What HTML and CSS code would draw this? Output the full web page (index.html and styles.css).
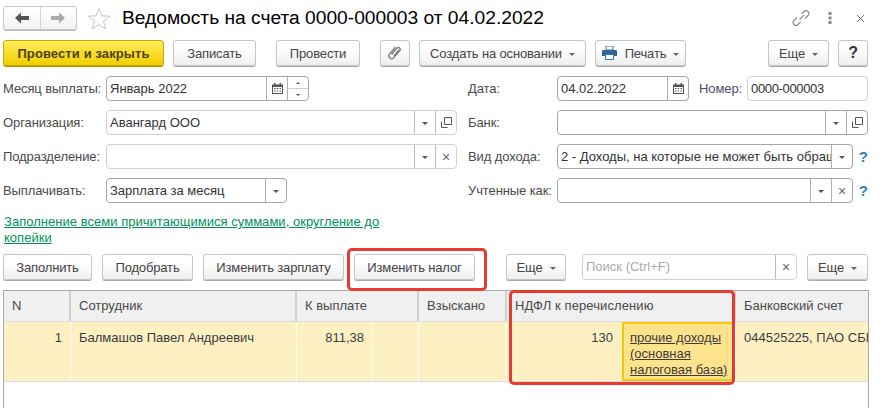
FILE: index.html
```html
<!DOCTYPE html>
<html lang="ru">
<head>
<meta charset="utf-8">
<title>Ведомость на счета</title>
<link rel="stylesheet" href="styles.css">
</head>
<body>
<div class="page">
  <header class="head">
    <div class="nav">
      <span class="nav-b"><svg width="14" height="12" viewBox="0 0 14 12"><path d="M0 6 6 .5V4h8v4H6v3.500z" fill="#555"/></svg></span>
      <span class="nav-b"><svg width="14" height="12" viewBox="0 0 14 12"><path d="M14 6 8 .5V4H0v4h8v3.500z" fill="#aaa"/></svg></span>
    </div>
    <svg class="star" width="24" height="23" viewBox="0 0 24 23"><path d="M12 1.500 14.800 8.800 22.800 9.200 16.500 14.200 18.700 22 12 17.600 5.300 22 7.500 14.200 1.200 9.200 9.200 8.800z" fill="#fff" stroke="#c4c4c4"/></svg>
    <h1 class="title">Ведомость на счета 0000-000003 от 04.02.2022</h1>
    <div class="head-icons">
      <svg width="18" height="18" viewBox="0 0 18 18" fill="none" stroke="#8a8a8a" stroke-width="1.100"><path d="M7.500 10.500 12 6M9.500 5 12 2.500a2.800 2.800 0 0 1 4 4L13 9.500M8.500 13 6 15.500a2.800 2.800 0 0 1-4-4L5 8.500"/></svg>
      <svg width="4" height="12" viewBox="0 0 4 12" fill="#888"><rect x="0.500" y="0" width="3" height="3"/><rect x="0.500" y="4.500" width="3" height="3"/><rect x="0.500" y="9" width="3" height="3"/></svg>
      <svg width="9" height="9" viewBox="0 0 9 9" stroke="#777" stroke-width="1"><path d="M1 1 8 8M8 1 1 8"/></svg>
    </div>
  </header>

  <div class="bar">
    <button class="btn primary">Провести и закрыть</button>
    <button class="btn w83">Записать</button>
    <button class="btn w84 ml11">Провести</button>
    <button class="btn w30 ml11"><svg width="14" height="16" viewBox="0 0 14 16" fill="none" stroke="#777" stroke-width="1.300"><path d="M3.500 9.500 9 3a2 2 0 0 1 3 2.500L5 13.500a3 3 0 0 1-4-3.800L7.500 2"/><path d="M6 11 11 5"/></svg></button>
    <button class="btn w167">Создать на основании<i class="caret"></i></button>
    <button class="btn w91"><svg class="printer" width="15" height="14" viewBox="0 0 15 14"><path d="M4 0h7v4H4z" fill="#fff" stroke="#3d6f9e"/><path d="M1 4h13a1 1 0 0 1 1 1v5h-3V8H3v2H0V5a1 1 0 0 1 1-1z" fill="#2f6496"/><path d="M3.500 8.500h8v5h-8z" fill="#fff" stroke="#3d6f9e"/></svg>Печать<i class="caret"></i></button>
    <span class="spacer"></span>
    <button class="btn w61">Еще<i class="caret"></i></button>
    <button class="btn w30 help">?</button>
  </div>

  <div class="form">
    <div class="col left">
      <div class="row">
        <label class="lbl">Месяц выплаты:</label>
        <div class="field dark w203"><span class="val">Январь 2022</span>
          <span class="fb"><svg class="cal" width="11" height="11" viewBox="0 0 11 11"><path d="M0 1.500h11V11H0z" fill="#555"/><path d="M2 0h1.500v3H2zM7.500 0H9v3H7.500z" fill="#555"/><path d="M1 4h9v6H1z" fill="#fff"/><path d="M2 5h1.500v1H2zM4.700 5h1.500v1H4.700zM7.500 5H9v1H7.500zM2 7.500h1.500v1H2zM4.700 7.500h1.500v1H4.700zM7.500 7.500H9v1H7.500z" fill="#555"/></svg></span>
          <span class="fb spin"><span class="s-up"></span><span class="s-dn"></span></span>
        </div>
      </div>
      <div class="row">
        <label class="lbl">Организация:</label>
        <div class="field grow"><span class="val">Авангард ООО</span>
          <span class="fb"><i class="caret dark"></i></span>
          <span class="fb"><svg width="11" height="11" viewBox="0 0 11 11" fill="none" stroke="#555"><path d="M3.500.5h7v7h-7z"/><path d="M.5 4.500v6h6" /></svg></span>
        </div>
      </div>
      <div class="row">
        <label class="lbl">Подразделение:</label>
        <div class="field grow"><span class="val"></span>
          <span class="fb"><i class="caret dark"></i></span>
          <span class="fb x">×</span>
        </div>
      </div>
      <div class="row">
        <label class="lbl">Выплачивать:</label>
        <div class="field dark w181"><span class="val">Зарплата за месяц</span>
          <span class="fb"><i class="caret dark"></i></span>
        </div>
      </div>
    </div>
    <div class="col right">
      <div class="row">
        <label class="lbl lbl-r">Дата:</label>
        <div class="field dark w132"><span class="val">04.02.2022</span>
          <span class="fb"><svg width="11" height="11" viewBox="0 0 11 11"><path d="M0 1.500h11V11H0z" fill="#555"/><path d="M2 0h1.500v3H2zM7.500 0H9v3H7.500z" fill="#555"/><path d="M1 4h9v6H1z" fill="#fff"/><path d="M2 5h1.500v1H2zM4.700 5h1.500v1H4.700zM7.500 5H9v1H7.500zM2 7.500h1.500v1H2zM4.700 7.500h1.500v1H4.700zM7.500 7.500H9v1H7.500z" fill="#555"/></svg></span>
        </div>
        <label class="lbl lbl-n">Номер:</label>
        <div class="field grow"><span class="val tight">0000-000003</span></div>
      </div>
      <div class="row">
        <label class="lbl lbl-r">Банк:</label>
        <div class="field dark grow"><span class="val"></span>
          <span class="fb"><i class="caret dark"></i></span>
          <span class="fb"><svg width="11" height="11" viewBox="0 0 11 11" fill="none" stroke="#555"><path d="M3.500.5h7v7h-7z"/><path d="M.5 4.500v6h6"/></svg></span>
        </div>
      </div>
      <div class="row">
        <label class="lbl lbl-r">Вид дохода:</label>
        <div class="field dark w296"><span class="val clip">2 - Доходы, на которые не может быть обращ</span>
          <span class="fb"><i class="caret dark"></i></span>
        </div>
        <span class="q">?</span>
      </div>
      <div class="row">
        <label class="lbl lbl-r">Учтенные как:</label>
        <div class="field dark w296"><span class="val"></span>
          <span class="fb"><i class="caret dark"></i></span>
          <span class="fb x">×</span>
        </div>
        <span class="q">?</span>
      </div>
    </div>
  </div>

  <a class="fill-link" href="#">Заполнение всеми причитающимися суммами, округление до копейки</a>

  <div class="bar bar2">
    <button class="btn w89">Заполнить</button>
    <button class="btn w91 ml10">Подобрать</button>
    <button class="btn w141 ml10">Изменить зарплату</button>
    <button class="btn w121 ml10">Изменить налог</button>
    <button class="btn w60 ml31">Еще<i class="caret"></i></button>
    <div class="field search"><span class="val ph">Поиск (Ctrl+F)</span><span class="fb x">×</span></div>
    <button class="btn w61 ml10">Еще<i class="caret"></i></button>
  </div>

  <div class="grid">
    <div class="tr th">
      <div class="c c-n">N</div>
      <div class="c c-e">Сотрудник</div>
      <div class="c c-p">К выплате</div>
      <div class="c c-v">Взыскано</div>
      <div class="c c-t">НДФЛ к перечислению</div>
      <div class="c c-b">Банковский счет</div>
    </div>
    <div class="tr td">
      <div class="c c-n num">1</div>
      <div class="c c-e">Балмашов Павел Андреевич</div>
      <div class="c c-p sub"><span class="num s-a">811,38</span><span class="s-b"></span></div>
      <div class="c c-v"></div>
      <div class="c c-t sub"><span class="num s-c">130</span><span class="s-d"><a href="#">прочие доходы (основная налоговая база)</a></span></div>
      <div class="c c-b clipb">044525225, ПАО СБЕР</div>
    </div>
  </div>

  <div class="mark mark-a"></div>
  <div class="mark mark-b"></div>
</div>
</body>
</html>
```
FILE: styles.css
```css
* { box-sizing: border-box; }
html, body { margin: 0; padding: 0; background: #fff; overflow: hidden; }
.page {
  position: relative; width: 884px; height: 408px; padding: 6px 16px 0 3px;
  font: 13px "Liberation Sans", Arial, sans-serif; color: #444; overflow: hidden;
}
.head { display: flex; align-items: center; height: 24px; }
.nav {
  display: flex; width: 74px; height: 24px; border: 1px solid #c8c8c8; border-radius: 3px;
  background: linear-gradient(#fff, #f2f2f2); box-shadow: 0 1px 0 #bbb;
}
.nav-b { flex: 1; display: flex; align-items: center; justify-content: center; }
.nav-b + .nav-b { border-left: 1px solid #d4d4d4; }
.star { margin-left: 10px; }
.title { margin: 0 0 0 11px; font-size: 19.2px; font-weight: 400; color: #000; white-space: nowrap; }
.head-icons { margin-left: auto; display: flex; align-items: center; width: 85px; margin-right: -9px; }
.head-icons svg:nth-child(2) { margin-left: 18px; }
.head-icons svg:nth-child(3) { margin-left: 24px; }

.bar { display: flex; align-items: stretch; height: 26px; margin-top: 10px; gap: 9px; }
.btn {
  height: 26px; padding: 0; border: 1px solid #c4c4c4; border-radius: 3px;
  background: linear-gradient(#fff 30%, #efefef); box-shadow: 0 1px 0 #aaa;
  font: inherit; letter-spacing: -.15px; color: #444; display: flex; align-items: center; justify-content: center; white-space: nowrap;
}
.primary {
  width: 161px; font-weight: 700; font-size: 13px; letter-spacing: .1px; color: #4e4200; border-color: #c9a800;
  background: linear-gradient(#ffec5c, #f2cf00); box-shadow: 0 1px 0 #a88f10;
}
.w83 { width: 83px; } .w84 { width: 84px; } .w30 { width: 30px; } .w167 { width: 167px; }
.w91 { width: 91px; } .w61 { width: 61px; } .w60 { width: 60px; } .w89 { width: 89px; }
.w141 { width: 141px; } .w121 { width: 121px; }
.ml10 { margin-left: 1px; } .ml11 { margin-left: 11px; } .ml31 { margin-left: 22px; }
.spacer { flex: 1; }
.help { font-size: 16px; font-weight: 700; color: #333; }
.printer { margin-right: 8px; }
.caret { display: inline-block; width: 0; height: 0; margin-left: 7px; margin-top: 2px; border: 3px solid transparent; border-top: 3px solid #666; border-bottom: 0; }
.caret.dark { margin: 1px 0 0; border-top-color: #555; }

.form { display: flex; margin-top: 10px; }
.col { display: flex; flex-direction: column; gap: 9px; }
.left { width: 454px; }
.right { width: 400px; margin-left: 11px; }
.row { display: flex; align-items: stretch; height: 25px; }
.lbl { display: flex; align-items: center; color: #4a4a4a; white-space: nowrap; width: 103px; flex: none; letter-spacing: -.1px; }
.lbl-r { width: 89px; }
.lbl-n { width: 48px; margin-left: 10px; color: #4b4b6e; }
.field {
  display: flex; height: 25px; border: 1px solid #d2d2d2; border-radius: 4px; background: #fff; overflow: hidden; flex: none;
}
.field.dark { border-color: #a6a6a6; }
.grow { flex: 1; }
.w203 { width: 203px; } .w181 { width: 181px; } .w132 { width: 132px; } .w296 { width: 296px; }
.val { flex: 1; min-width: 0; padding: 0 0 0 3px; line-height: 23px; color: #333; white-space: nowrap; overflow: hidden; }
.tight { letter-spacing: -.35px; }
.ph { color: #aaa; }
.fb {
  width: 21px; flex: none; border-left: 1px solid #b0b0b0; display: flex; align-items: center; justify-content: center;
}
.field:not(.dark) .fb { border-left-color: #bbb; }
.x { font-size: 14px; color: #666; line-height: 1; }
.spin { flex-direction: column; }
.s-up, .s-dn { flex: 1; width: 100%; display: flex; align-items: center; justify-content: center; }
.s-up { border-bottom: 1px solid #cfcfcf; }
.s-up::after { content: ""; border: 2px solid transparent; border-bottom: 2px solid #555; border-top: 0; }
.s-dn::after { content: ""; border: 2px solid transparent; border-top: 2px solid #555; border-bottom: 0; }
.q { width: 15px; text-align: right; line-height: 25px; font-size: 15px; font-weight: 700; color: #2a7fc0; }

.fill-link {
  display: block; width: 400px; margin: 9px 0 0 1px; line-height: 16px; padding-top: 2px;
  color: #00925a; letter-spacing: .03px; text-decoration: underline;
}
.bar2 { margin-top: 8px; gap: 9px; }
.search { width: 215px; height: 26px; margin-left: 7px; }
.search .val { line-height: 24px; }

.grid { margin-top: 10px; width: 866px; height: 120px; border: 1px solid #aaa; border-bottom: 0; overflow: hidden; }
.tr { display: grid; grid-template-columns: 67px 226px 122px 88px 229px 132px; }
.th { height: 31px; background: #f0f0f0; border-bottom: 1px solid #ddd; }
.th .c { border-right: 2px solid #d0d0d0; padding: 0 8px; line-height: 30px; color: #4a4a4a; }
.th .c-t { letter-spacing: .1px; }
.th .c-b { border-right: 0; }
.td { height: 60px; background: #fdf1c4; border-bottom: 1px solid #ddd; }
.td .c { border-right: 1px solid #fff; padding: 8px 8px 0; line-height: 16px; color: #3c3c3c; white-space: nowrap; overflow: hidden; }
.td .c-b { border-right: 0; }
.num { display: block; text-align: right; }
.c.sub { padding: 0; display: flex; }
.s-a { width: 76px; padding: 8px 8px 0 0; border-right: 1px solid #fff; }
.s-b { flex: 1; }
.s-c { width: 115px; padding: 8px 9px 0 0; }
.s-d {
  flex: 1; border: 2px solid #f8c70a; background: #ffe38c; padding: 6px 0 0 6px;
  white-space: normal; line-height: 16px;
}
.s-d a { color: #3c3c3c; text-decoration: underline; }

.mark { position: absolute; border: 3px solid #e83a2e; border-radius: 5px; pointer-events: none; }
.mark-a { left: 347px; top: 248px; width: 140px; height: 43px; }
.mark-b { left: 509px; top: 290px; width: 226px; height: 95px; }
```
